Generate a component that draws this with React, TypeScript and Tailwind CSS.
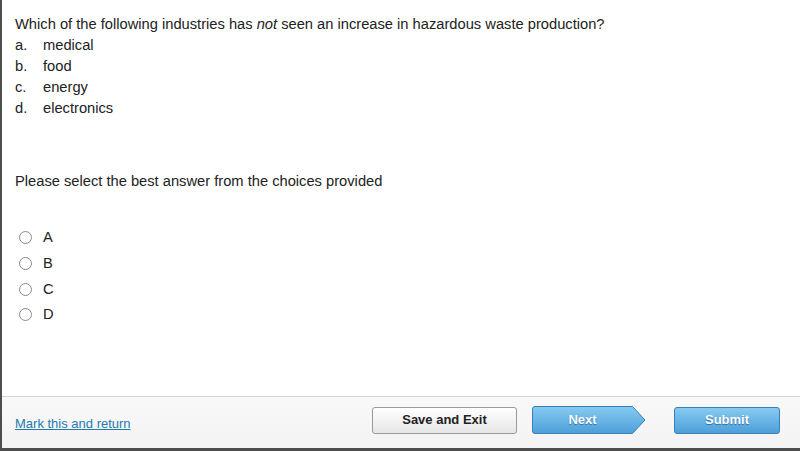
const choices = [
  { key: 'a.', text: 'medical' },
  { key: 'b.', text: 'food' },
  { key: 'c.', text: 'energy' },
  { key: 'd.', text: 'electronics' },
]

const radios = ['A', 'B', 'C', 'D']

export default function App() {
  return (
    <div className="w-[800px] h-[451px] flex flex-col bg-white border-l-2 border-b-[3px] border-[#4d4d4d] font-['Liberation_Sans',Arial,sans-serif] text-[#222] overflow-hidden">

      {/* ── Question ── */}
      <div className="flex-1 pl-[13px] pt-[14px] text-[14.7px] leading-[21px]">
        <p>
          Which of the following industries has <em>not</em> seen an increase in hazardous waste production?
        </p>
        {choices.map(c => (
          <div key={c.key} className="flex">
            <span className="w-[28px]">{c.key}</span>
            <span>{c.text}</span>
          </div>
        ))}

        <p className="mt-[52px]">Please select the best answer from the choices provided</p>

        <div className="mt-[33px] flex flex-col">
          {radios.map(r => (
            <label key={r} className="flex items-center h-[25.7px] cursor-pointer">
              <span className="ml-[4px] w-[13px] h-[13px] rounded-full border border-[#8a8a8a] bg-white" />
              <span className="ml-[11px]">{r}</span>
            </label>
          ))}
        </div>
      </div>

      {/* ── Footer ── */}
      <div className="h-[52px] flex-shrink-0 flex items-start justify-between border-t border-[#d2d2d2] bg-gradient-to-b from-[#f9f9f9] to-[#f3f3f3] pl-[13px] pr-[20px] pt-[9px]">
        <a href="#" className="mt-[8px] text-[13px] text-[#1f7bb0] underline">Mark this and return</a>

        <div className="flex items-center">
          <button className="w-[145px] h-[27px] rounded-[3px] border border-[#9a9a9a] bg-gradient-to-b from-white to-[#e6e6e6] text-[13px] font-bold text-[#222]">
            Save and Exit
          </button>

          <button className="relative ml-[15px] w-[114px] h-[28px] text-[13px] font-bold text-white [text-shadow:0_1px_1px_#2f6d9c]">
            <svg className="absolute inset-0" width="114" height="28" viewBox="0 0 114 28">
              <defs>
                <linearGradient id="nextg" x1="0" y1="0" x2="0" y2="1">
                  <stop offset="0" stopColor="#86cbf1" />
                  <stop offset="1" stopColor="#4d9fd9" />
                </linearGradient>
              </defs>
              <path
                d="M3 0.5 H100.5 L113 14 L100.5 27.5 H3 Q0.5 27.5 0.5 25 V3 Q0.5 0.5 3 0.5 Z"
                fill="url(#nextg)"
                stroke="#3a7fb7"
              />
            </svg>
            <span className="relative block w-[101px]">Next</span>
          </button>

          <button className="ml-[28px] w-[106px] h-[27px] rounded-[3px] border border-[#3a7fb7] bg-gradient-to-b from-[#86cbf1] to-[#4d9fd9] text-[13px] font-bold text-white [text-shadow:0_1px_1px_#2f6d9c]">
            Submit
          </button>
        </div>
      </div>
    </div>
  )
}
